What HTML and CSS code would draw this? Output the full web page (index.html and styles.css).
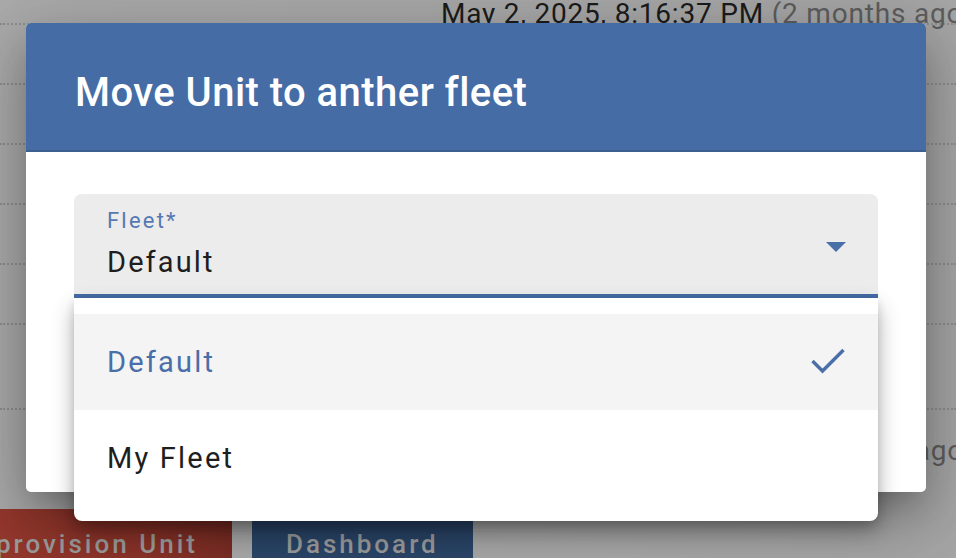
FILE: index.html
```html
<!DOCTYPE html>
<html>
<head>
<meta charset="utf-8">
<link rel="stylesheet" href="styles.css">
</head>
<body>
<div class="page">
  <div class="row row-top">
    <span></span>
    <span class="date">May 2, 2025, 8:16:37 PM <span class="ago">(2 months ago)</span></span>
  </div>
  <div class="row row-line"></div>
  <div class="row row-line"></div>
  <div class="row row-line"></div>
  <div class="row row-line"></div>
  <div class="row row-line"></div>
  <div class="row row-line row-tall"></div>
  <div class="row row-date2">
    <span class="date date-end">Apr 30, 2025, 9:41:05 AM <span class="ago">(2 months ago</span></span>
  </div>
  <div class="actions">
    <div class="btn btn-red">Deprovision Unit</div>
    <div class="btn btn-blue">Dashboard</div>
  </div>
</div>

<div class="dialog">
  <div class="dialog-header">
    <h2 class="dialog-title">Move Unit to anther fleet</h2>
  </div>
  <div class="dialog-body">
    <div class="select">
      <div class="field">
        <div class="field-text">
          <div class="field-label">Fleet*</div>
          <div class="field-value">Default</div>
        </div>
        <svg class="arrow" width="20" height="10" viewBox="0 0 20 10"><path d="M0 0h20L10 10z" fill="#4a6ea8"/></svg>
      </div>
      <div class="menu">
        <div class="menu-item selected">
          <span>Default</span>
          <svg class="check" width="36" height="26" viewBox="0 0 36 26"><polyline points="1.5,13 11.5,23 32.5,2" fill="none" stroke="#4a6ea8" stroke-width="3.4"/></svg>
        </div>
        <div class="menu-item"><span>My Fleet</span></div>
      </div>
    </div>
  </div>
</div>
</body>
</html>
```

FILE: styles.css
```css
* { box-sizing: border-box; }
html, body { margin: 0; padding: 0; }
body {
  width: 956px;
  height: 558px;
  overflow: hidden;
  background: #a8a8a8;
  font-family: Roboto, "Liberation Sans", sans-serif;
  position: relative;
}
.page {
  display: flex;
  flex-direction: column;
  background: linear-gradient(90deg, #ababab 0%, #a6a6a6 100%);
  height: 558px;
}
.page > * { flex-shrink: 0; }
.row {
  display: grid;
  grid-template-columns: 441px 1fr;
  border-bottom: 2px dotted #8e8e8e;
}
.row-top {
  height: 25px;
  align-items: end;
  white-space: nowrap;
}
.date {
  font-size: 28px;
  line-height: 28px;
  letter-spacing: 0.8px;
  color: #1c1c1c;
  white-space: nowrap;
}
.ago { color: #5e5e5e; }
.row-line { height: 60px; }
.row-tall { height: 85px; }
.row-date2 {
  border-bottom: none;
  display: flex;
  justify-content: flex-end;
  height: 99px;
  padding-top: 27px;
}
.date-end { margin-right: -8px; }
.actions {
  display: flex;
  gap: 20px;
  margin-left: -75px;
}
.btn {
  height: 60px;
  padding: 22px 34px 0;
  font-size: 26px;
  line-height: 26px;
  font-weight: 500;
  letter-spacing: 3px;
  color: #9d9d9d;
  white-space: nowrap;
}
.btn-red { background: linear-gradient(90deg, #9c3b2f 0%, #8a3329 70%, #7a2d24 100%); }
.btn-blue { background: #2b4669; }

.dialog {
  position: absolute;
  left: 26px;
  top: 23px;
  width: 900px;
  height: 469px;
  background: #fff;
  border-radius: 5px;
  box-shadow: 0 18px 30px -10px rgba(0,0,0,.25), 0 30px 60px 6px rgba(0,0,0,.14), 0 12px 80px 14px rgba(0,0,0,.12);
}
.dialog-header {
  height: 129px;
  background: #456ca5;
  border-bottom: 2px solid #3c5f92;
  border-radius: 5px 5px 0 0;
  padding: 50px 49px 0;
}
.dialog-title {
  margin: 0;
  color: #fff;
  font-size: 40px;
  line-height: 40px;
  font-weight: 500;
  letter-spacing: 0.45px;
}
.dialog-body {
  padding: 42px 48px 0;
}
.select { position: relative; }
.field {
  height: 104px;
  background: #ececec;
  border-radius: 8px 8px 0 0;
  border-bottom: 4px solid #456ca5;
  padding: 16px 32px 0 33px;
  display: flex;
  justify-content: space-between;
  align-items: flex-start;
}
.field-label {
  font-size: 22px;
  line-height: 22px;
  color: #5679b2;
  letter-spacing: 2.2px;
  margin-bottom: 16px;
}
.field-value {
  font-size: 29px;
  line-height: 29px;
  color: #1e1e1e;
  letter-spacing: 2.1px;
}
.arrow { margin-top: 32px; }
.menu {
  position: absolute;
  left: 0;
  right: 0;
  top: 104px;
  background: #fff;
  border-radius: 0 0 8px 8px;
  padding: 16px 0 15px;
  box-shadow: 0 10px 22px rgba(0,0,0,.3), 0 4px 10px rgba(0,0,0,.12);
}
.menu-item {
  height: 96px;
  display: flex;
  align-items: center;
  justify-content: space-between;
  padding: 0 31px 0 33px;
  font-size: 29px;
  letter-spacing: 2.2px;
  color: #1e1e1e;
}
.menu-item.selected {
  background: #f4f4f4;
  color: #4a6ea8;
}
.check { margin-top: -2px; }
```
